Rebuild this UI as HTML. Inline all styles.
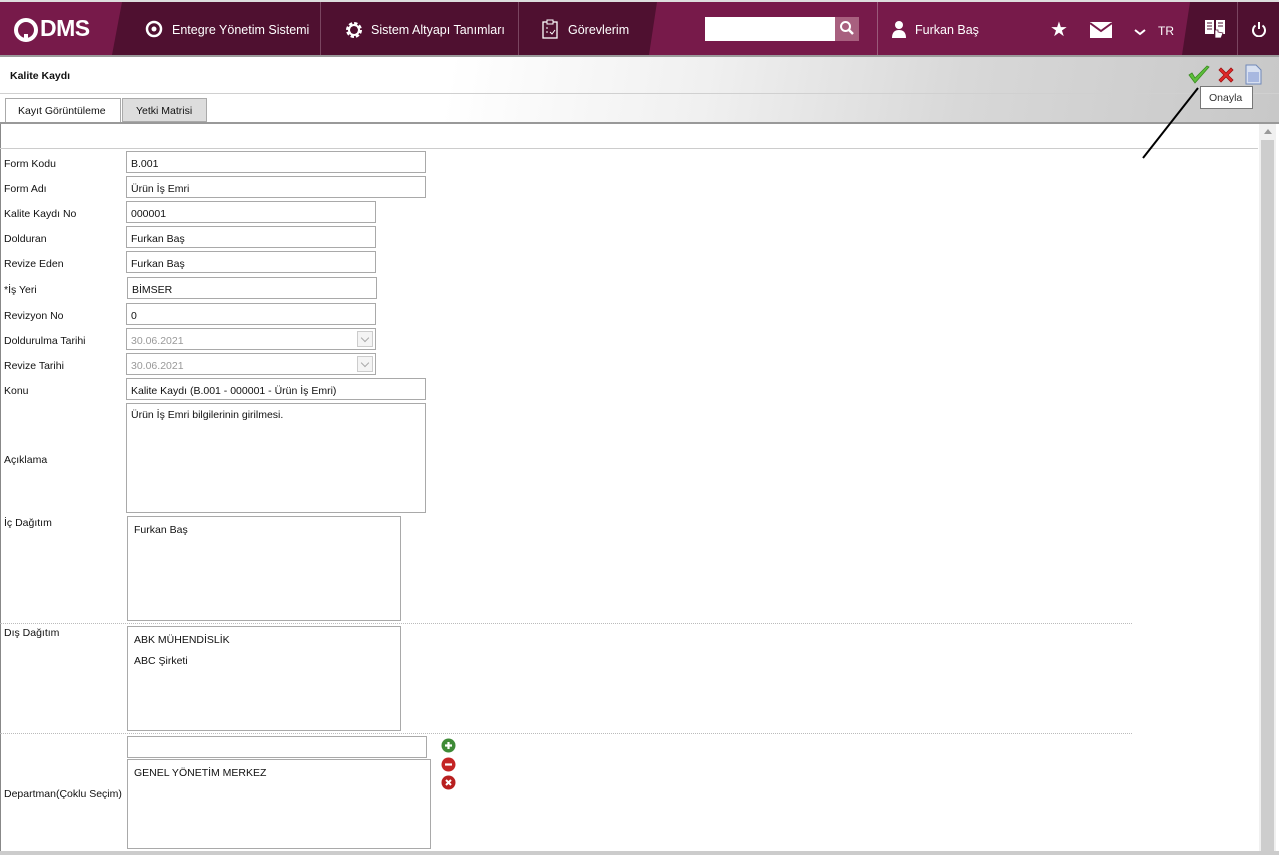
<!DOCTYPE html>
<html><head><meta charset="utf-8">
<style>
*{margin:0;padding:0;box-sizing:border-box}
body{width:1279px;height:855px;overflow:hidden;background:#fff;font-family:"Liberation Sans",Tahoma,sans-serif;font-size:10.5px;color:#111;position:relative}
.a{position:absolute}
.hdr{left:0;top:0;width:1279px;height:57px;background:#771a4a;border-top:2px solid #ddd;border-bottom:2px solid #9a9a9a}
.w{color:#fff;font-size:12.5px}
.inp{position:absolute;border:1px solid #a9a9a9;background:#fff;height:22px;padding:6px 0 0 4px;font-size:10.5px}
.dis{color:#999}
.lbl{position:absolute;left:4px;font-size:10.5px}
.dd{position:absolute;right:2px;top:2px;width:16px;height:16px;border:1px solid #ccc;background:#f4f4f4}
.dd:after{content:"";position:absolute;left:4px;top:3px;width:5px;height:5px;border-right:1px solid #aaa;border-bottom:1px solid #aaa;transform:rotate(45deg)}
</style></head><body>
<div class="a hdr">
  <div class="a" style="left:0;top:0;width:110px;height:53px;background:#771a4a"></div>
  <div class="a" style="left:112px;top:0;width:545px;height:53px;background:#4f1030;clip-path:polygon(10px 0,100% 0,calc(100% - 8px) 100%,0 100%)"></div>
  <div class="a" style="left:1182px;top:0;width:97px;height:53px;background:#4f1030;clip-path:polygon(8px 0,100% 0,100% 100%,0 100%)"></div>
  <div class="a" style="left:320px;top:0;width:1px;height:53px;background:#7a4560"></div>
  <div class="a" style="left:518px;top:0;width:1px;height:53px;background:#7a4560"></div>
  <div class="a" style="left:877px;top:0;width:1px;height:53px;background:#9a5a7a"></div>
  <div class="a" style="left:1237px;top:0;width:1px;height:53px;background:#7a4560"></div>
  <svg class="a" style="left:13px;top:15px" width="26" height="26"><circle cx="13" cy="13" r="10" fill="none" stroke="#fff" stroke-width="4"/><path d="M13 17v5" stroke="#fff" stroke-width="4"/></svg>
  <div class="a w" style="left:40px;top:13px;font-size:23px;font-weight:bold;letter-spacing:-0.5px">DMS</div>
  <svg class="a" style="left:145px;top:18px" width="18" height="18"><circle cx="9" cy="9" r="7" fill="none" stroke="#fff" stroke-width="2.5"/><circle cx="9" cy="9" r="2.5" fill="#fff"/></svg>
  <div class="a w" style="left:172px;top:21px">Entegre Yönetim Sistemi</div>
  <svg class="a" style="left:344px;top:18px" width="20" height="20" viewBox="0 0 20 20"><circle cx="10" cy="10" r="6" fill="none" stroke="#fff" stroke-width="4" stroke-dasharray="3 1.7"/><circle cx="10" cy="10" r="5" fill="none" stroke="#fff" stroke-width="2"/></svg>
  <div class="a w" style="left:371px;top:21px">Sistem Altyapı Tanımları</div>
  <svg class="a" style="left:541px;top:17px" width="18" height="20"><rect x="2" y="3" width="14" height="16" fill="none" stroke="#fff" stroke-width="1.3"/><rect x="6" y="1" width="6" height="4" fill="#4f1030" stroke="#fff"/><path d="M5 9h2M5 13h2M9 13l2 2 3-4" stroke="#fff" fill="none"/></svg>
  <div class="a w" style="left:568px;top:21px">Görevlerim</div>
  <div class="a" style="left:705px;top:15px;width:130px;height:24px;background:#fff"></div>
  <div class="a" style="left:835px;top:15px;width:24px;height:24px;background:#a8607f"></div>
  <svg class="a" style="left:839px;top:18px" width="16" height="16"><circle cx="6.5" cy="6.5" r="4.5" fill="none" stroke="#fff" stroke-width="2"/><path d="M10 10l4 4" stroke="#fff" stroke-width="2.5"/></svg>
  <svg class="a" style="left:892px;top:18px" width="14" height="18"><circle cx="7" cy="5" r="4" fill="#fff"/><path d="M0 18c0-6 3-8 7-8s7 2 7 8z" fill="#fff"/></svg>
  <div class="a w" style="left:915px;top:21px">Furkan Baş</div>
  <div class="a w" style="left:1050px;top:15px;font-size:20px">★</div>
  <svg class="a" style="left:1090px;top:20px" width="22" height="16"><rect width="22" height="16" fill="#fff"/><path d="M0 1l11 8 11-8" stroke="#771a4a" stroke-width="2" fill="none"/></svg>
  <svg class="a" style="left:1134px;top:27px" width="12" height="8"><path d="M1 1l5 4 5-4" stroke="#fff" stroke-width="2" fill="none"/></svg>
  <div class="a w" style="left:1158px;top:22px;font-size:12px">TR</div>
  <svg class="a" style="left:1204px;top:16px" width="22" height="22"><path d="M1 2h9v14H1zM12 2h9v14h-9z" fill="#fff"/><path d="M3 5h5M3 8h5M3 11h5M14 5h5M14 8h5" stroke="#4f1030"/><path d="M11 12v8h6l2-5-5-1v-2z" fill="#fff" stroke="#4f1030" stroke-width=".7"/></svg>
  <svg class="a" style="left:1251px;top:19px" width="16" height="16"><path d="M4.5 4.5a6 6 0 1 0 7 0" stroke="#fff" stroke-width="2" fill="none"/><path d="M8 1v7" stroke="#fff" stroke-width="2"/></svg>
</div>
<div class="a" style="left:0;top:57px;width:1279px;height:66px;background:linear-gradient(100deg,#fff 0%,#fff 35%,#f0f0f0 55%,#d8d8d8 75%,#c8c8c8 100%)"></div>
<div class="a" style="left:0;top:93px;width:1279px;height:1px;background:#d0d0d0"></div>
<div class="a" style="left:10px;top:70px;font-weight:bold">Kalite Kaydı</div>
<div class="a" style="left:5px;top:98px;width:116px;height:25px;background:#fff;border:1px solid #aaa;border-bottom:none;padding:6px 0 0 12px">Kayıt Görüntüleme</div>
<div class="a" style="left:122px;top:98px;width:85px;height:24px;background:#ddd;border:1px solid #aaa;padding:6px 0 0 13px">Yetki Matrisi</div>
<div class="a" style="left:0;top:122px;width:1279px;height:2px;background:#999"></div>
<div class="a" style="left:0;top:124px;width:1258px;height:728px;background:#fff;border-left:1px solid #888"></div>
<div class="a" style="left:0;top:148px;width:1258px;height:1px;background:#ccc"></div>
<div class="a" style="left:1259px;top:124px;width:17px;height:728px;background:#f0f0f0"></div>
<div class="a" style="left:1261px;top:140px;width:13px;height:712px;background:#cdcdcd"></div>
<div class="a" style="left:1264px;top:129px;width:0;height:0;border:4px solid transparent;border-bottom:5px solid #999;border-top:none"></div>
<div class="a" style="left:0;top:851px;width:1279px;height:4px;background:#ccc"></div>
<svg class="a" style="left:1188px;top:65px" width="22" height="20"><path d="M1 10l6 8L21 2l-2-1L7 13 4 8z" fill="#5cbf3a" stroke="#3a8a20" stroke-width=".8"/></svg>
<svg class="a" style="left:1216px;top:65px" width="20" height="20"><path d="M3 5l5 5-5 5 2 2 5-5 5 5 2-2-5-5 5-5-2-2-5 5-5-5z" fill="#e02a2a" stroke="#a01010" stroke-width=".8"/></svg>
<svg class="a" style="left:1245px;top:64px" width="17" height="21"><path d="M1 1h10l5 5v14H1z" fill="#d8e0f0" stroke="#7088b8"/><rect x="3" y="8" width="11" height="10" fill="#a8b8e0"/></svg>
<div class="a" style="left:1200px;top:86px;width:53px;height:23px;background:#fff;border:1px solid #777;padding:5px 0 0 8px;color:#333">Onayla</div>
<svg class="a" style="left:1140px;top:85px" width="62" height="76"><path d="M58 3L3 73" stroke="#000" stroke-width="2"/></svg>
<div class="lbl" style="top:158px">Form Kodu</div><div class="inp" style="left:126px;top:151px;width:300px">B.001</div>
<div class="lbl" style="top:183px">Form Adı</div><div class="inp" style="left:126px;top:176px;width:300px">Ürün İş Emri</div>
<div class="lbl" style="top:208px">Kalite Kaydı No</div><div class="inp" style="left:126px;top:201px;width:250px">000001</div>
<div class="lbl" style="top:233px">Dolduran</div><div class="inp" style="left:126px;top:226px;width:250px">Furkan Baş</div>
<div class="lbl" style="top:258px">Revize Eden</div><div class="inp" style="left:126px;top:251px;width:250px">Furkan Baş</div>
<div class="lbl" style="top:284px">*İş Yeri</div><div class="inp" style="left:127px;top:277px;width:250px">BİMSER</div>
<div class="lbl" style="top:310px">Revizyon No</div><div class="inp" style="left:126px;top:303px;width:250px">0</div>
<div class="lbl" style="top:335px">Doldurulma Tarihi</div><div class="inp dis" style="left:126px;top:328px;width:250px">30.06.2021<div class="dd"></div></div>
<div class="lbl" style="top:360px">Revize Tarihi</div><div class="inp dis" style="left:126px;top:353px;width:250px">30.06.2021<div class="dd"></div></div>
<div class="lbl" style="top:385px">Konu</div><div class="inp" style="left:126px;top:378px;width:300px">Kalite Kaydı (B.001 - 000001 - Ürün İş Emri)</div>
<div class="lbl" style="top:454px">Açıklama</div><div class="inp" style="left:126px;top:403px;width:300px;height:110px;padding-top:5px">Ürün İş Emri bilgilerinin girilmesi.</div>
<div class="lbl" style="top:517px">İç Dağıtım</div><div class="inp" style="left:127px;top:516px;width:274px;height:105px;padding:7px 0 0 6px">Furkan Baş</div>
<div class="a" style="left:0;top:623px;width:1132px;border-top:1px dotted #bbb"></div>
<div class="lbl" style="top:627px">Dış Dağıtım</div><div class="inp" style="left:127px;top:626px;width:274px;height:105px;padding:3px 0 0 6px;line-height:21px">ABK MÜHENDİSLİK<br>ABC Şirketi</div>
<div class="a" style="left:0;top:733px;width:1132px;border-top:1px dotted #bbb"></div>
<div class="inp" style="left:127px;top:736px;width:300px"></div>
<div class="lbl" style="top:788px">Departman(Çoklu Seçim)</div><div class="inp" style="left:127px;top:759px;width:304px;height:90px;padding:7px 0 0 6px">GENEL YÖNETİM MERKEZ</div>
<svg class="a" style="left:441px;top:738px" width="15" height="15"><circle cx="7.5" cy="7.5" r="7" fill="#3e8a36"/><path d="M7.5 4v7M4 7.5h7" stroke="#fff" stroke-width="2.2"/></svg>
<svg class="a" style="left:441px;top:757px" width="15" height="15"><circle cx="7.5" cy="7.5" r="7" fill="#c42424"/><path d="M4 7.5h7" stroke="#fff" stroke-width="2.2"/></svg>
<svg class="a" style="left:441px;top:775px" width="15" height="15"><circle cx="7.5" cy="7.5" r="7" fill="#b82020"/><path d="M5 5l5 5M10 5l-5 5" stroke="#fff" stroke-width="2"/></svg>
</body></html>
